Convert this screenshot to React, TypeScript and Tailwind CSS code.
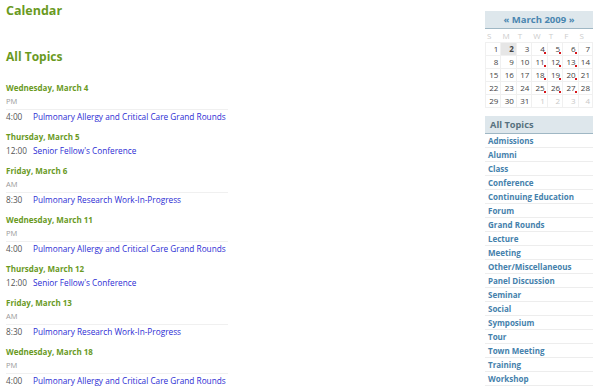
const days = [
  {
    title: "Wednesday, March 4",
    period: "PM",
    time: "4:00",
    event: "Pulmonary Allergy and Critical Care Grand Rounds",
  },
  { title: "Thursday, March 5", time: "12:00", event: "Senior Fellow's Conference" },
  {
    title: "Friday, March 6",
    period: "AM",
    time: "8:30",
    event: "Pulmonary Research Work-In-Progress",
  },
  {
    title: "Wednesday, March 11",
    period: "PM",
    time: "4:00",
    event: "Pulmonary Allergy and Critical Care Grand Rounds",
  },
  { title: "Thursday, March 12", time: "12:00", event: "Senior Fellow's Conference" },
  {
    title: "Friday, March 13",
    period: "AM",
    time: "8:30",
    event: "Pulmonary Research Work-In-Progress",
  },
  {
    title: "Wednesday, March 18",
    period: "PM",
    time: "4:00",
    event: "Pulmonary Allergy and Critical Care Grand Rounds",
  },
];

const topics = [
  "Admissions",
  "Alumni",
  "Class",
  "Conference",
  "Continuing Education",
  "Forum",
  "Grand Rounds",
  "Lecture",
  "Meeting",
  "Other/Miscellaneous",
  "Panel Discussion",
  "Seminar",
  "Social",
  "Symposium",
  "Tour",
  "Town Meeting",
  "Training",
  "Workshop",
];

const weekdays = ["S", "M", "T", "W", "T", "F", "S"];
const eventDays = [4, 5, 6, 11, 12, 13, 18, 19, 20, 25, 26, 27];

// next-month days are negative so they can be greyed out
const weeks = [
  [1, 2, 3, 4, 5, 6, 7],
  [8, 9, 10, 11, 12, 13, 14],
  [15, 16, 17, 18, 19, 20, 21],
  [22, 23, 24, 25, 26, 27, 28],
  [29, 30, 31, -1, -2, -3, -4],
];

function MiniCalendar() {
  return (
    <div className="w-full">
      <div className="h-[18px] pt-[1px] bg-[#dee7ec] border-b border-[#9fb7c4] flex items-center justify-center text-[9.5px] font-bold text-[#4a86b0]">
        « March 2009 »
      </div>
      <div className="grid grid-cols-7 h-[14px] items-center border-b border-[#f0f0f0]">
        {weekdays.map((d, i) => (
          <div key={i} className="pl-[2px] text-[8px] text-[#cccccc]">
            {d}
          </div>
        ))}
      </div>
      {weeks.map((week, w) => (
        <div key={w} className="grid grid-cols-7 h-[13px] border-b border-[#f0f0f0]">
          {week.map((n, i) => (
            <div
              key={i}
              className={
                "relative flex items-center justify-end pr-[2px] text-[8px] border-l border-[#f0f0f0] last:border-r " +
                (n === 2 ? "bg-[#e6e6e6] font-bold text-[#444]" : n < 0 ? "text-[#c8c8c8]" : "text-[#444]")
              }
            >
              {Math.abs(n)}
              {n > 0 && eventDays.includes(n) && (
                <span className="absolute bottom-[1px] right-[1px] w-[2px] h-[2px] bg-[#d8161b]" />
              )}
            </div>
          ))}
        </div>
      ))}
    </div>
  );
}

export default function App() {
  return (
    <div className="w-[600px] h-[392px] overflow-hidden bg-white flex font-['Open_Sans',sans-serif]">
      <main className="flex-1 pl-[6px] pt-[3px]">
        <h1 className="text-[12.5px] leading-[16px] font-bold text-[#6a9a1f]">Calendar</h1>
        <h2 className="mt-[30px] text-[12px] leading-[16px] font-bold text-[#6a9a1f]">All Topics</h2>
        <div className="mt-[16px] w-[222px]">
          {days.map((d, i) => (
            <div key={i} className="mb-[6px]">
              <div className="h-[14px] flex items-center text-[8px] font-bold text-[#6a9a1f]">{d.title}</div>
              {d.period && (
                <div className="h-[15px] flex items-center border-b border-[#f0f0f0] text-[7.5px] text-[#9a9a9a]">
                  {d.period}
                </div>
              )}
              <div className="h-[14px] flex items-center text-[8.25px]">
                <span className="w-[27px] text-[#555]">{d.time}</span>
                <span className="text-[#2c2cd4]">{d.event}</span>
              </div>
            </div>
          ))}
        </div>
      </main>
      <aside className="w-[108px] mr-[7px] pt-[11px]">
        <MiniCalendar />
        <div className="mt-[8px] h-[18px] bg-[#dee7ec] border-b border-[#9fb7c4] flex items-center pl-[5px] text-[9.25px] font-bold text-[#58727f]">
          All Topics
        </div>
        <ul>
          {topics.map((t) => (
            <li
              key={t}
              className="h-[14px] flex items-center pl-[3px] border-b border-[#ededed] text-[8px] font-bold text-[#4581ac]"
            >
              {t}
            </li>
          ))}
        </ul>
      </aside>
    </div>
  );
}
